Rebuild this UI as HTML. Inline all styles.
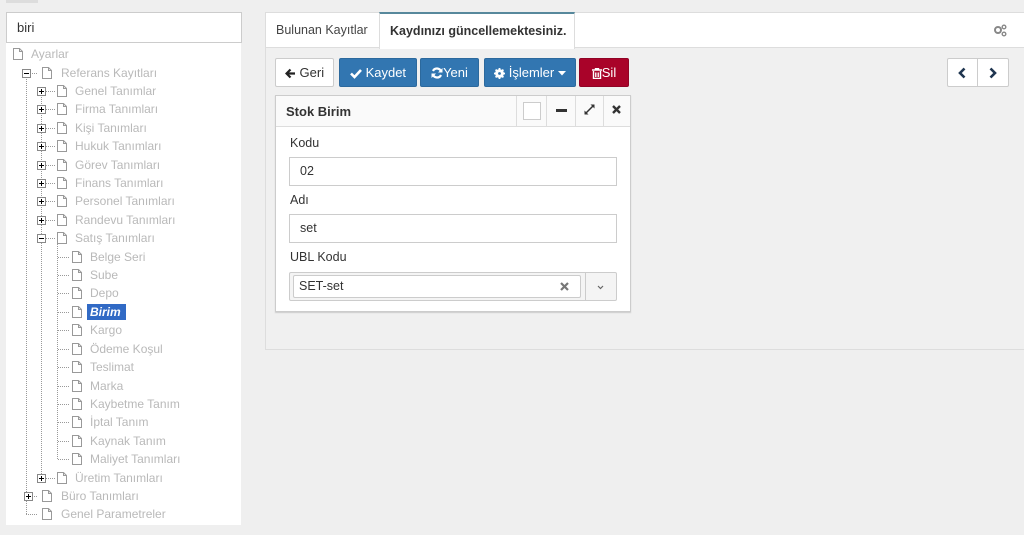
<!DOCTYPE html>
<html><head><meta charset="utf-8"><style>
*{box-sizing:border-box;margin:0;padding:0}
body{width:1024px;height:534px;background:#efefef;font-family:"Liberation Sans",sans-serif;position:relative;overflow:hidden;font-size:12px;color:#333}
.a{position:absolute}
.t{position:absolute;color:#b9b9b9;font-size:12px;line-height:18px;white-space:nowrap}
.btn{position:absolute;top:58px;height:29px;border-radius:2px;color:#fff;font-size:13px;line-height:27px;text-align:center;background:#3276b1;border:1px solid #2c699d;white-space:nowrap}
.btn svg{vertical-align:-2px}
.lbl{position:absolute;left:290px;font-size:12.5px;color:#333}
.inp{position:absolute;left:289px;width:328px;height:29px;border:1px solid #ccc;background:#fff;font-size:12.5px;line-height:27px;padding-left:10px;color:#333}
</style></head><body>
<div class="a" style="left:6px;top:0;width:32px;height:3px;background:#ddd"></div>
<div class="a" style="left:6px;top:12px;width:236px;height:31px;border:1px solid #ccc;background:#fff;font-size:13px;line-height:29px;padding-left:10px;color:#333">biri</div>
<div class="a" style="left:6px;top:43px;width:235px;height:482px;background:#fff"></div>

<svg class="a" style="left:0;top:1px" width="250" height="534">
<defs><g id="pg"><path d="M0.5 0.5H6.5L9.5 3.5V11.5H0.5Z M6.5 0.5V3.5H9.5" fill="#fff" stroke="#999" stroke-width="1"/></g></defs>
<g stroke="#999" stroke-dasharray="1,1" stroke-width="1">
<line x1="26.5" y1="76" x2="26.5" y2="513"/>
<line x1="41.5" y1="94" x2="41.5" y2="477"/>
<line x1="57.5" y1="241" x2="57.5" y2="458"/>
<line x1="26" y1="72.5" x2="38" y2="72.5"/>
<line x1="30" y1="495.5" x2="38" y2="495.5"/>
<line x1="26" y1="513.5" x2="38" y2="513.5"/>
</g>
<use href="#pg" x="13" y="47"/>
<use href="#pg" x="42" y="66"/>
<use href="#pg" x="57" y="84"/><use href="#pg" x="57" y="102"/><use href="#pg" x="57" y="121"/><use href="#pg" x="57" y="139"/><use href="#pg" x="57" y="158"/><use href="#pg" x="57" y="176"/><use href="#pg" x="57" y="194"/><use href="#pg" x="57" y="213"/><use href="#pg" x="57" y="231"/><use href="#pg" x="57" y="471"/>
<g stroke="#999" stroke-dasharray="1,1">
<line x1="46" y1="90.5" x2="55" y2="90.5"/><line x1="46" y1="108.5" x2="55" y2="108.5"/><line x1="46" y1="127.5" x2="55" y2="127.5"/><line x1="46" y1="145.5" x2="55" y2="145.5"/><line x1="46" y1="164.5" x2="55" y2="164.5"/><line x1="46" y1="182.5" x2="55" y2="182.5"/><line x1="46" y1="200.5" x2="55" y2="200.5"/><line x1="46" y1="219.5" x2="55" y2="219.5"/><line x1="46" y1="237.5" x2="55" y2="237.5"/><line x1="46" y1="477.5" x2="55" y2="477.5"/>
<line x1="58" y1="256.5" x2="70" y2="256.5"/><line x1="58" y1="274.5" x2="70" y2="274.5"/><line x1="58" y1="292.5" x2="70" y2="292.5"/><line x1="58" y1="311.5" x2="70" y2="311.5"/><line x1="58" y1="329.5" x2="70" y2="329.5"/><line x1="58" y1="348.5" x2="70" y2="348.5"/><line x1="58" y1="366.5" x2="70" y2="366.5"/><line x1="58" y1="385.5" x2="70" y2="385.5"/><line x1="58" y1="403.5" x2="70" y2="403.5"/><line x1="58" y1="421.5" x2="70" y2="421.5"/><line x1="58" y1="440.5" x2="70" y2="440.5"/><line x1="58" y1="458.5" x2="70" y2="458.5"/>
</g>
<use href="#pg" x="72" y="250"/><use href="#pg" x="72" y="268"/><use href="#pg" x="72" y="286"/><use href="#pg" x="72" y="305"/><use href="#pg" x="72" y="323"/><use href="#pg" x="72" y="342"/><use href="#pg" x="72" y="360"/><use href="#pg" x="72" y="379"/><use href="#pg" x="72" y="397"/><use href="#pg" x="72" y="415"/><use href="#pg" x="72" y="434"/><use href="#pg" x="72" y="452"/>
<use href="#pg" x="42" y="489"/><use href="#pg" x="42" y="507"/>
<g fill="#fff" stroke="#888">
<rect x="22.5" y="68.5" width="8" height="8"/>
<rect x="37.5" y="86.5" width="8" height="8"/><rect x="37.5" y="104.5" width="8" height="8"/><rect x="37.5" y="123.5" width="8" height="8"/><rect x="37.5" y="141.5" width="8" height="8"/><rect x="37.5" y="160.5" width="8" height="8"/><rect x="37.5" y="178.5" width="8" height="8"/><rect x="37.5" y="196.5" width="8" height="8"/><rect x="37.5" y="215.5" width="8" height="8"/><rect x="37.5" y="233.5" width="8" height="8"/><rect x="37.5" y="473.5" width="8" height="8"/>
<rect x="24.5" y="491.5" width="8" height="8"/>
</g>
<g stroke="#000">
<line x1="24" y1="72.5" x2="29" y2="72.5"/>
<line x1="39" y1="237.5" x2="44" y2="237.5"/>
<g id="pl"><line x1="39" y1="90.5" x2="44" y2="90.5"/><line x1="41.5" y1="88" x2="41.5" y2="93"/></g>
<use href="#pl" y="18"/><use href="#pl" y="37"/><use href="#pl" y="55"/><use href="#pl" y="74"/><use href="#pl" y="92"/><use href="#pl" y="110"/><use href="#pl" y="129"/><use href="#pl" y="387"/>
<use href="#pl" x="-13" y="405"/>
</g>
</svg>

<div class="t" style="left:31px;top:45px">Ayarlar</div>
<div class="t" style="left:61px;top:64px">Referans Kayıtları</div>
<div class="t" style="left:75px;top:82px">Genel Tanımlar</div>
<div class="t" style="left:75px;top:100px">Firma Tanımları</div>
<div class="t" style="left:75px;top:119px">Kişi Tanımları</div>
<div class="t" style="left:75px;top:137px">Hukuk Tanımları</div>
<div class="t" style="left:75px;top:156px">Görev Tanımları</div>
<div class="t" style="left:75px;top:174px">Finans Tanımları</div>
<div class="t" style="left:75px;top:192px">Personel Tanımları</div>
<div class="t" style="left:75px;top:211px">Randevu Tanımları</div>
<div class="t" style="left:75px;top:229px">Satış Tanımları</div>
<div class="t" style="left:90px;top:248px">Belge Seri</div>
<div class="t" style="left:90px;top:266px">Sube</div>
<div class="t" style="left:90px;top:284px">Depo</div>
<div class="a" style="left:87px;top:304px;width:39px;height:16px;background:#316ac5;color:#fff;font-weight:bold;font-style:italic;font-size:12px;line-height:16px;padding-left:3px">Birim</div>
<div class="t" style="left:90px;top:321px">Kargo</div>
<div class="t" style="left:90px;top:340px">Ödeme Koşul</div>
<div class="t" style="left:90px;top:358px">Teslimat</div>
<div class="t" style="left:90px;top:377px">Marka</div>
<div class="t" style="left:90px;top:395px">Kaybetme Tanım</div>
<div class="t" style="left:90px;top:413px">İptal Tanım</div>
<div class="t" style="left:90px;top:432px">Kaynak Tanım</div>
<div class="t" style="left:90px;top:450px">Maliyet Tanımları</div>
<div class="t" style="left:75px;top:469px">Üretim Tanımları</div>
<div class="t" style="left:61px;top:487px">Büro Tanımları</div>
<div class="t" style="left:61px;top:505px">Genel Parametreler</div>

<!-- right panel -->
<div class="a" style="left:265px;top:12px;width:760px;height:338px;border:1px solid #ddd;background:#f0f0f0"></div>
<div class="a" style="left:266px;top:13px;width:758px;height:35px;background:#fff;border-bottom:1px solid #ddd"></div>
<div class="a" style="left:276px;top:13px;font-size:12.5px;line-height:35px;color:#444">Bulunan Kayıtlar</div>
<div class="a" style="left:379px;top:12px;width:196px;height:37px;background:#fff;border-top:2px solid #57889c;border-left:1px solid #ddd;border-right:1px solid #ddd;font-weight:bold;font-size:12.5px;line-height:34px;padding-left:10px;color:#333">Kaydınızı güncellemektesiniz.</div>
<svg class="a" style="left:993px;top:24px" width="14" height="13" viewBox="0 0 14 13"><circle cx="5" cy="6" r="3" fill="none" stroke="#888" stroke-width="2"/><circle cx="11" cy="3" r="1.8" fill="none" stroke="#888" stroke-width="1.4"/><circle cx="11" cy="10" r="1.8" fill="none" stroke="#888" stroke-width="1.4"/></svg>

<div class="btn" style="left:275px;width:59px;background:#fff;border-color:#ccc;color:#333"><svg width="11" height="11" viewBox="0 0 11 11"><path d="M5.5 1.5L1.5 5.5L5.5 9.5M1.5 5.5H10" fill="none" stroke="#222" stroke-width="2.2"/></svg> Geri</div>
<div class="btn" style="left:339px;width:78px"><svg width="12" height="11" viewBox="0 0 12 11"><path d="M1 5.5L4.5 9L11 2" fill="none" stroke="#fff" stroke-width="2.6"/></svg> Kaydet</div>
<div class="btn" style="left:420px;width:59px"><svg width="12" height="12" viewBox="0 0 12 12"><path d="M10 4.5A4.3 4.3 0 0 0 2 4M2 7.5A4.3 4.3 0 0 0 10 8" fill="none" stroke="#fff" stroke-width="2.2"/><path d="M11.5 1V5.5H7ZM0.5 11V6.5H5Z" fill="#fff"/></svg>Yeni</div>
<div class="btn" style="left:484px;width:92px"><svg width="11" height="11" viewBox="0 0 11 11"><circle cx="5.5" cy="5.5" r="3.3" fill="none" stroke="#fff" stroke-width="2.2"/><path d="M5.5 0V11M0 5.5H11M1.6 1.6L9.4 9.4M9.4 1.6L1.6 9.4" stroke="#fff" stroke-width="1.8"/><circle cx="5.5" cy="5.5" r="1.4" fill="#3276b1"/></svg> İşlemler <svg width="8" height="5" viewBox="0 0 8 5" style="vertical-align:1px"><path d="M0 0H8L4 4.5Z" fill="#fff"/></svg></div>
<div class="btn" style="left:579px;width:50px;background:#a90329;border-color:#900325"><svg width="10" height="11" viewBox="0 0 10 11"><path d="M0 2H10M3.5 2V0.7H6.5V2M1.5 3V10.5H8.5V3" fill="none" stroke="#fff" stroke-width="1.4"/><path d="M3.5 4.5V9M5 4.5V9M6.5 4.5V9" stroke="#fff" stroke-width="0.9"/></svg>Sil</div>

<div class="a" style="left:947px;top:58px;width:62px;height:29px;background:#fff;border:1px solid #ccc;border-radius:2px"></div>
<div class="a" style="left:977px;top:58px;width:1px;height:29px;background:#ccc"></div>
<svg class="a" style="left:957px;top:67px" width="10" height="12" viewBox="0 0 10 12"><path d="M7.5 1.5L3 6L7.5 10.5" fill="none" stroke="#1f3550" stroke-width="2.6"/></svg>
<svg class="a" style="left:988px;top:67px" width="10" height="12" viewBox="0 0 10 12"><path d="M2.5 1.5L7 6L2.5 10.5" fill="none" stroke="#1f3550" stroke-width="2.6"/></svg>

<div class="a" style="left:275px;top:95px;width:356px;height:217px;background:#fff;border:1px solid #ccc;box-shadow:0 1px 1px #ccc"></div>
<div class="a" style="left:276px;top:96px;width:354px;height:31px;background:#fafafa;border-bottom:1px solid #ddd"></div>
<div class="a" style="left:286px;top:96px;font-weight:bold;font-size:13px;line-height:31px;color:#333">Stok Birim</div>
<div class="a" style="left:516px;top:96px;width:1px;height:31px;background:#ddd"></div>
<div class="a" style="left:546px;top:96px;width:1px;height:31px;background:#ddd"></div>
<div class="a" style="left:575px;top:96px;width:1px;height:31px;background:#ddd"></div>
<div class="a" style="left:603px;top:96px;width:1px;height:31px;background:#ddd"></div>
<div class="a" style="left:523px;top:102px;width:18px;height:18px;border:1px solid #ccc;background:#fff"></div>
<div class="a" style="left:556px;top:109px;width:11px;height:3px;background:#333"></div>
<svg class="a" style="left:584px;top:104px" width="11" height="11" viewBox="0 0 11 11"><path d="M6.5 0.5H10.5V4.5ZM4.5 10.5H0.5V6.5Z" fill="#333"/><path d="M9 2L2 9" stroke="#333" stroke-width="1.5"/></svg>
<svg class="a" style="left:612px;top:105px" width="9" height="9" viewBox="0 0 9 9"><path d="M1 1L8 8M8 1L1 8" stroke="#333" stroke-width="2.4"/></svg>

<div class="lbl" style="top:136px">Kodu</div>
<div class="inp" style="top:157px">02</div>
<div class="lbl" style="top:193px">Adı</div>
<div class="inp" style="top:214px">set</div>
<div class="lbl" style="top:250px">UBL Kodu</div>
<div class="a" style="left:289px;top:272px;width:328px;height:29px;border:1px solid #ccc;border-radius:2px;background:#f4f4f4"></div>
<div class="a" style="left:293px;top:275px;width:288px;height:23px;border:1px solid #ccc;border-radius:2px;background:#fff;font-size:12.5px;line-height:21px;padding-left:5px">SET-set</div>
<svg class="a" style="left:560px;top:282px" width="9" height="9" viewBox="0 0 9 9"><path d="M1 1L8 8M8 1L1 8" stroke="#777" stroke-width="2.2"/></svg>
<div class="a" style="left:585px;top:273px;width:1px;height:27px;background:#ccc"></div>
<svg class="a" style="left:597px;top:285px" width="7" height="5" viewBox="0 0 7 5"><path d="M1 1L3.5 3.5L6 1" fill="none" stroke="#666" stroke-width="1.2"/></svg>
</body></html>
